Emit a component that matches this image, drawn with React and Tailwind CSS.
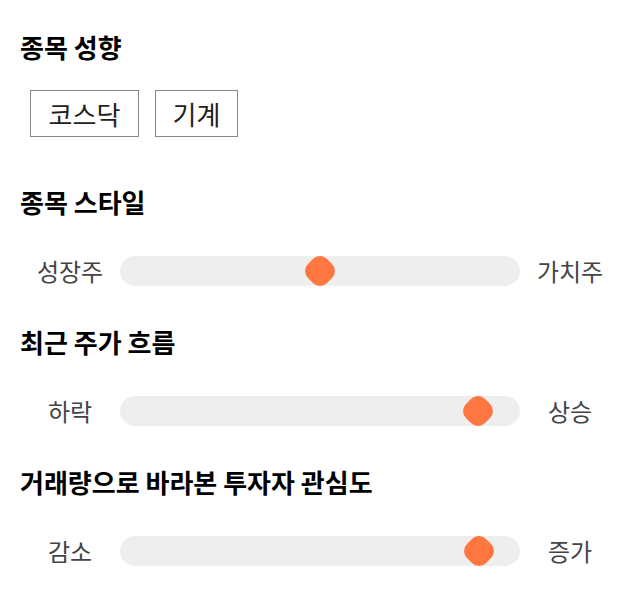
import React from "react";

const sliders = [
  { title: "종목 스타일", left: "성장주", right: "가치주", value: 50 },
  { title: "최근 주가 흐름", left: "하락", right: "상승", value: 89.5 },
  { title: "거래량으로 바라본 투자자 관심도", left: "감소", right: "증가", value: 89.75 },
];

function Slider({ left, right, value }) {
  return (
    <div className="flex items-center h-[30px]">
      <span className="w-[100px] text-center text-[24px] leading-[30px] text-[#444]">{left}</span>
      <div className="relative flex-1 h-[30px] rounded-full bg-[#eeeeee]">
        <div
          className="absolute top-1/2 w-[27px] h-[27px] -translate-x-1/2 -translate-y-1/2 rotate-45 rounded-[10px] bg-[#ff7640]"
          style={{ left: `${value}%` }}
        />
      </div>
      <span className="w-[100px] text-center text-[24px] leading-[30px] text-[#444]">{right}</span>
    </div>
  );
}

export default function App() {
  return (
    <div
      className="w-[640px] h-[606px] bg-white px-5 pt-[32px] text-black"
      style={{ fontFamily: '"Noto Sans CJK KR", "Noto Sans", sans-serif' }}
    >
      {/* 종목 성향 */}
      <h2 className="text-[26px] font-bold leading-[30px]">종목 성향</h2>
      <div className="flex gap-4 mt-[28px] ml-[10px]">
        <button className="h-[47px] w-[109px] border border-[#888] text-[26px] leading-none text-[#222]">
          코스닥
        </button>
        <button className="h-[47px] w-[83px] border border-[#888] text-[26px] leading-none text-[#222]">
          기계
        </button>
      </div>

      {sliders.map((s, i) => (
        <section key={i} className={i === 0 ? "mt-[50px]" : "mt-[41px]"}>
          <h2 className="text-[26px] font-bold leading-[30px]">{s.title}</h2>
          <div className="mt-[39px]">
            <Slider left={s.left} right={s.right} value={s.value} />
          </div>
        </section>
      ))}
    </div>
  );
}
